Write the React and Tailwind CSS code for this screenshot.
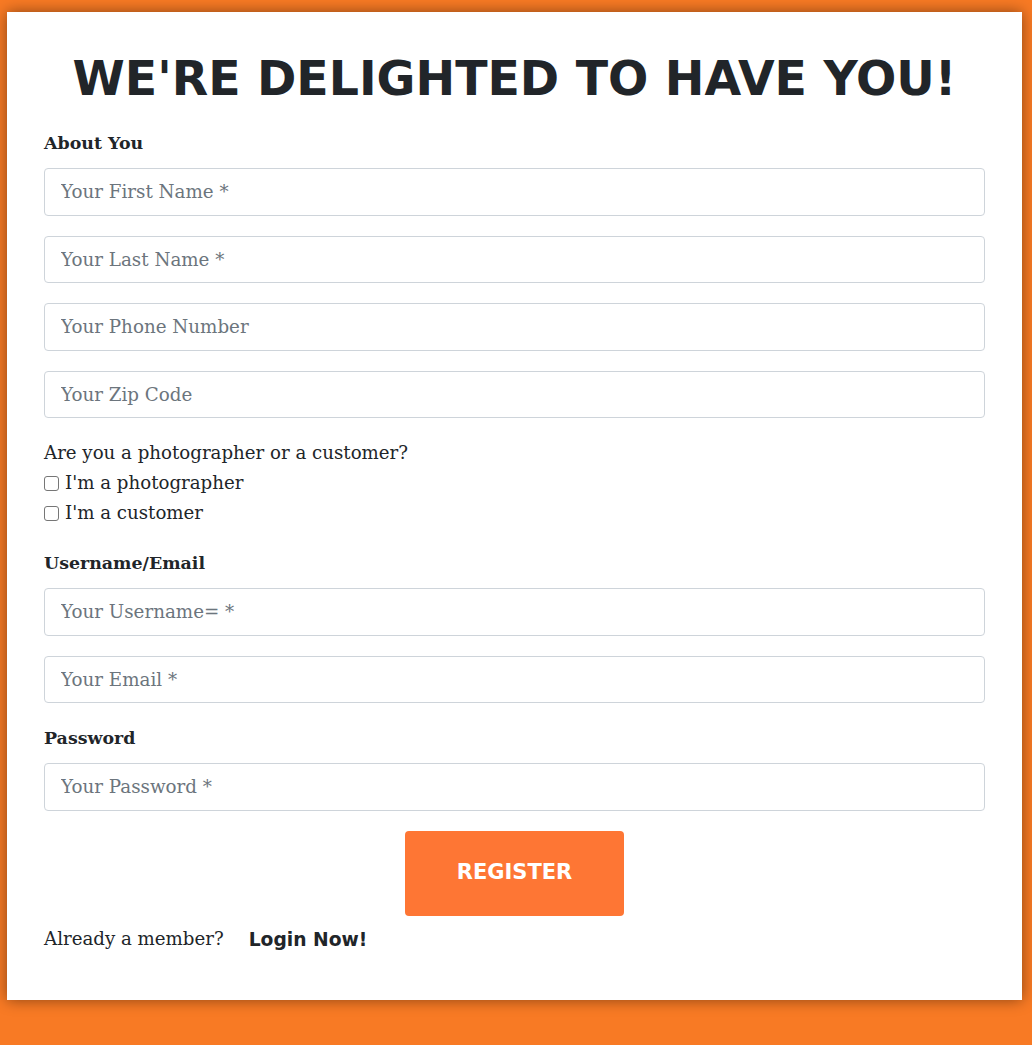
import React from "react";

function Field({ placeholder }) {
  return (
    <input
      type="text"
      placeholder={placeholder}
      className="block w-full h-[47.5px] border border-[#ced4da] rounded-[4px] px-[16px] text-[18.3px] text-[#495057] placeholder:text-[#6c757d] bg-white outline-none font-['DejaVu_Serif','Liberation_Serif',serif]"
    />
  );
}

function Check({ label }) {
  return (
    <label className="flex items-center h-[30px] text-[18.2px] text-[#212529] font-['DejaVu_Serif','Liberation_Serif',serif]">
      <span className="inline-block w-[15px] h-[15px] border border-[#767676] rounded-[3px] bg-white mr-[6px]"></span>
      {label}
    </label>
  );
}

function Label({ children }) {
  return (
    <div className="mt-[20px] h-[30px] leading-[30px] text-[17.4px] font-bold text-[#212529] font-['DejaVu_Serif','Liberation_Serif',serif]">
      {children}
    </div>
  );
}

export default function App() {
  return (
    <div className="min-h-[1045px] w-full bg-[#f87a24] pt-[12px] pl-[7px] pr-[10px] pb-[45px]">
      <div className="w-[1015px] h-[988px] bg-white shadow-[0_0_14px_rgba(0,0,0,0.45)] px-[37px] pt-[38px] font-['DejaVu_Serif','Liberation_Serif',serif]">
        <h1 className="text-center text-[47.4px] leading-[58px] font-bold text-[#212529] font-['DejaVu_Sans','Open_Sans',sans-serif]">
          WE'RE DELIGHTED TO HAVE YOU!
        </h1>
        <Label>About You</Label>
        <div className="mt-[10px] flex flex-col gap-[20px]">
          <Field placeholder="Your First Name *" />
          <Field placeholder="Your Last Name *" />
          <Field placeholder="Your Phone Number" />
          <Field placeholder="Your Zip Code" />
        </div>
        <div className="mt-[20px] h-[30px] leading-[30px] text-[18.2px] text-[#212529]">
          Are you a photographer or a customer?
        </div>
        <Check label="I'm a photographer" />
        <Check label="I'm a customer" />
        <Label>Username/Email</Label>
        <div className="mt-[10px] flex flex-col gap-[20px]">
          <Field placeholder="Your Username= *" />
          <Field placeholder="Your Email *" />
        </div>
        <Label>Password</Label>
        <div className="mt-[10px]">
          <Field placeholder="Your Password *" />
        </div>
        <div className="mt-[20px] flex justify-center">
          <button className="w-[219px] h-[85px] rounded-[4px] bg-[#fe7634] text-white text-[21px] font-bold font-['DejaVu_Sans','Open_Sans',sans-serif]">
            REGISTER
          </button>
        </div>
        <div className="mt-[8px] flex items-center h-[30px]">
          <span className="text-[18.2px] text-[#212529]">Already a member?</span>
          <span className="ml-[25px] mt-[3px] text-[18.7px] font-bold text-[#212529] font-['DejaVu_Sans','Open_Sans',sans-serif]">
            Login Now!
          </span>
        </div>
      </div>
    </div>
  );
}
